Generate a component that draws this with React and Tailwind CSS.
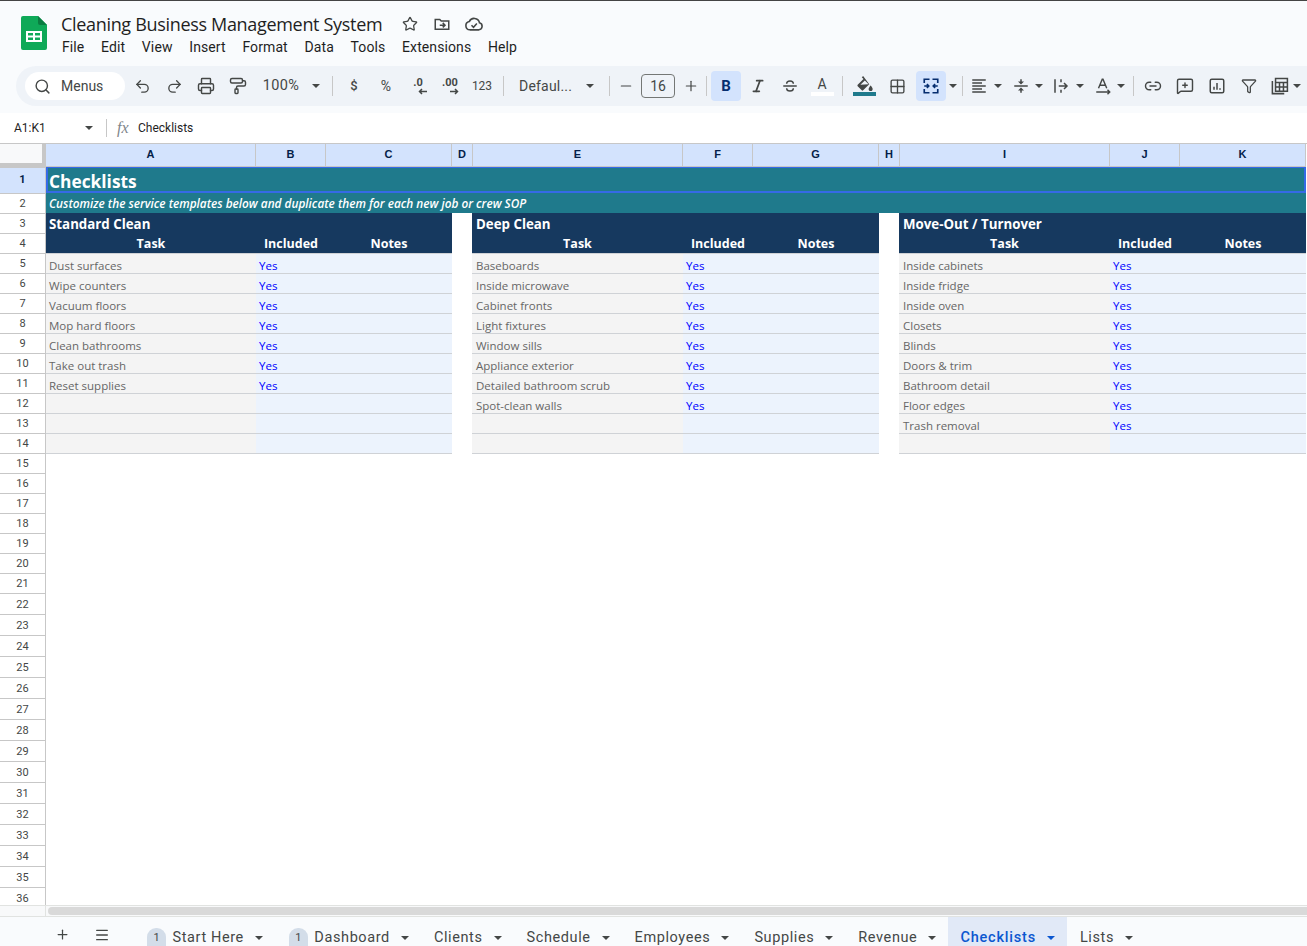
import { Fragment } from 'react';
import {
  Star, Undo2, Redo2, Printer, PaintRoller, Search, Minus, Plus, Italic, Grid2x2, Link2, MessageSquarePlus,
  Filter, Menu,
} from 'lucide-react';

const FONT_UI = "font-['Roboto','Liberation_Sans',sans-serif]";
const FONT_CELL = "font-['Open_Sans','Noto_Sans',sans-serif]";
const HEAD_COLS = 'grid grid-cols-[46px_210px_70px_126px_21px_210px_70px_126px_21px_210px_70px_126px]';
// cell fills start one pixel left of the column edge, over the neighbour's gridline
const COLS = 'grid grid-cols-[46px_210px_70px_126px_20px_211px_70px_126px_20px_211px_70px_126px] grid-rows-1';

const columns = ['A', 'B', 'C', 'D', 'E', 'F', 'G', 'H', 'I', 'J', 'K'];

const standard = ['Dust surfaces', 'Wipe counters', 'Vacuum floors', 'Mop hard floors', 'Clean bathrooms', 'Take out trash', 'Reset supplies'];
const deep = ['Baseboards', 'Inside microwave', 'Cabinet fronts', 'Light fixtures', 'Window sills', 'Appliance exterior', 'Detailed bathroom scrub', 'Spot-clean walls'];
const moveOut = ['Inside cabinets', 'Inside fridge', 'Inside oven', 'Closets', 'Blinds', 'Doors & trim', 'Bathroom detail', 'Floor edges', 'Trash removal'];

const sections = [
  { title: 'Standard Clean', items: standard },
  { title: 'Deep Clean', items: deep },
  { title: 'Move-Out / Turnover', items: moveOut },
];

const menus = ['File', 'Edit', 'View', 'Insert', 'Format', 'Data', 'Tools', 'Extensions', 'Help'];

const tabs = [
  { name: 'Start Here', badge: true },
  { name: 'Dashboard', badge: true },
  { name: 'Clients' },
  { name: 'Schedule' },
  { name: 'Employees' },
  { name: 'Supplies' },
  { name: 'Revenue' },
  { name: 'Checklists', active: true },
  { name: 'Lists' },
];

const SheetsLogo = () => (
  <svg width="26" height="34" viewBox="0 0 26 34">
    <path d="M2 0h15l9 9v23a2 2 0 0 1-2 2H2a2 2 0 0 1-2-2V2a2 2 0 0 1 2-2z" fill="#0fa958" />
    <path d="M17 0l9 9h-7a2 2 0 0 1-2-2z" fill="#0a7d41" />
    <path d="M5 15h16v11H5z M7 17v2.5h5V17z M14 17v2.5h5V17z M7 21.5V24h5v-2.5z M14 21.5V24h5v-2.5z" fill="#fff" fillRule="evenodd" />
  </svg>
);

const MoveIcon = () => (
  <svg width="18" height="18" viewBox="0 0 24 24" fill="none" stroke="#444746" strokeWidth="2">
    <path d="M3 6h6l2 2h10v11H3z" />
    <path d="M9 13.5h7M13 10.5l3 3-3 3" />
  </svg>
);

const CloudIcon = () => (
  <svg width="20" height="20" viewBox="0 0 24 24" fill="none" stroke="#444746" strokeWidth="1.9">
    <path d="M7 19a5 5 0 0 1-.7-9.9A6.5 6.5 0 0 1 18.6 10.6 4.3 4.3 0 0 1 18 19z" />
    <path d="M9 13.5l2.4 2.4 4-4.4" />
  </svg>
);

const Caret = ({ className = 'border-t-[#444746]' }) => (
  <span className={`inline-block w-0 h-0 shrink-0 border-x-[4px] border-x-transparent border-t-[4px] ${className}`} />
);

const Btn = ({ w = 'w-[32px]', active, children }) => (
  <div className={`${w} h-[30px] shrink-0 flex items-center justify-center text-[#444746] rounded-[4px] ${active ? 'bg-[#d3e3fd]' : ''}`}>
    {children}
  </div>
);

const Sep = () => <div className="w-px h-5 bg-[#c7c7c7] shrink-0" />;

const Space = ({ w }) => <div className={`${w} shrink-0`} />;

const Strike = () => (
  <svg width="18" height="18" viewBox="0 0 24 24" fill="none" stroke="#444746" strokeWidth="1.9">
    <path d="M3 12h18M7.5 9c0-5 9-5 9 0M16.5 15c0 5-9 5-9 0" />
  </svg>
);

const FillIcon = () => (
  <div className="flex flex-col items-center">
    <svg width="17" height="15" viewBox="0 0 24 22" fill="#444746">
      <path d="M10 0L8 2l2.5 2.5L2 13c-.6.6-.6 1.5 0 2l6 6c.6.6 1.5.6 2 0l9-9zM6 13l6.500-6.500L18 12z" fillRule="evenodd" />
      <path d="M21 14s-3 3.300-3 5.200a3 3 0 0 0 6 0C24 17.300 21 14 21 14z" />
    </svg>
    <div className="w-[23px] h-[4px] bg-[#1f7a8c] mt-[1px]" />
  </div>
);

const MergeIcon = () => (
  <svg width="18" height="18" viewBox="0 0 24 24" fill="none" stroke="#062e6f" strokeWidth="2.200">
    <path d="M10 3H3v5M14 3h7v5M10 21H3v-5M14 21h7v-5" />
    <path d="M3 12h6M6.500 9.500L9 12l-2.500 2.500M21 12h-6M17.500 9.500L15 12l2.500 2.500" />
  </svg>
);

const AlignIcon = () => (
  <svg width="18" height="18" viewBox="0 0 24 24" fill="none" stroke="#444746" strokeWidth="1.700">
    <path d="M3 4h18M3 8h13M3 12h18M3 16h13M3 20h18" />
  </svg>
);

const VAlignIcon = () => (
  <svg width="18" height="18" viewBox="0 0 24 24" fill="#444746">
    <path d="M3 11h18v2H3z" />
    <path d="M11 3h2v3h3l-4 4-4-4h3zM11 21h2v-3h3l-4-4-4 4h3z" />
  </svg>
);

const WrapIcon = () => (
  <svg width="18" height="18" viewBox="0 0 24 24" fill="none" stroke="#444746" strokeWidth="2">
    <path d="M4 3v18M12 3v4M12 17v4M9 12h11M16 8l4 4-4 4" />
  </svg>
);

const RotateIcon = () => (
  <svg width="18" height="18" viewBox="0 0 24 24" fill="none" stroke="#444746" strokeWidth="1.900">
    <path d="M6 15l5-12h1l5 12M8 11h8M3 20h17M18 17l3 3-3 3" />
  </svg>
);

const ChartIcon = () => (
  <svg width="18" height="18" viewBox="0 0 24 24" fill="none" stroke="#444746" strokeWidth="2">
    <rect x="3" y="3" width="18" height="18" rx="2" />
    <path d="M8 17v-4M12 17V8M16 17v-2" />
  </svg>
);

const TableIcon = () => (
  <svg width="19" height="19" viewBox="0 0 24 24" fill="none" stroke="#444746" strokeWidth="1.900">
    <path d="M3 5v16h15" />
    <path d="M7 2h15v16H7zM7 7h15M7 12.500h15M12 7v11M17 7v11" />
  </svg>
);

const ArrowSmall = ({ dir }) => (
  <svg width="9" height="7" viewBox="0 0 9 7" fill="none" stroke="#444746" strokeWidth="1.500" className="ml-2">
    {dir === 'left' ? <path d="M9 3.500H1.500M4 1L1.500 3.500 4 6" /> : <path d="M0 3.500h7.500M5 1l2.500 2.500L5 6" />}
  </svg>
);

const icon = { size: 18, strokeWidth: 1.9 };

const Toolbar = () => (
  <div className={`ml-4 h-[40px] bg-[#eff3f8] rounded-l-[20px] flex items-center ${FONT_UI}`}>
    <div className="ml-[9px] w-[100px] h-[28px] bg-white rounded-full flex items-center text-[#444746] shrink-0">
      <Search size={17} strokeWidth={2} className="ml-[9px]" />
      <span className="ml-[10px] text-[14px]">Menus</span>
    </div>
    <Space w="w-[1px]" />
    <Btn><Undo2 {...icon} size={17} /></Btn>
    <Btn><Redo2 {...icon} size={17} /></Btn>
    <Btn><Printer {...icon} /></Btn>
    <Btn><PaintRoller {...icon} /></Btn>
    <Btn w="w-[73px]">
      <span className="text-[14.500px] tracking-[0.3px] ml-[2px]">100%</span>
      <span className="ml-[13px] flex"><Caret /></span>
    </Btn>
    <Space w="w-[5px]" />
    <Sep />
    <Space w="w-[5px]" />
    <Btn><span className="text-[13px] font-medium">$</span></Btn>
    <Btn><span className="text-[14px]">%</span></Btn>
    <Btn>
      <div className="flex flex-col items-center">
        <span className="text-[11px] font-bold leading-[10px]">.0</span>
        <ArrowSmall dir="left" />
      </div>
    </Btn>
    <Btn>
      <div className="flex flex-col items-center">
        <span className="text-[11px] font-bold leading-[10px]">.00</span>
        <ArrowSmall dir="right" />
      </div>
    </Btn>
    <Btn><span className="text-[12px]">123</span></Btn>
    <Space w="w-[5px]" />
    <Sep />
    <Space w="w-[15px]" />
    <span className="text-[14px] text-[#444746] w-[67px] shrink-0 tracking-[0.2px]">Defaul...</span>
    <Caret />
    <Space w="w-[15px]" />
    <Sep />
    <Btn><Minus size={16} strokeWidth={1.800} /></Btn>
    <div className="w-[34px] h-[24px] shrink-0 border border-[#747775] rounded-[4px] flex items-center justify-center text-[14px] text-[#444746] -ml-[1px]">16</div>
    <Btn w="w-[31px]"><Plus size={16} strokeWidth={1.800} /></Btn>
    <Sep />
    <Space w="w-[4px]" />
    <Btn w="w-[30px]" active><span className="text-[15px] font-bold text-[#062e6f]">B</span></Btn>
    <Space w="w-[1px]" />
    <Btn><Italic size={16} strokeWidth={2.500} /></Btn>
    <Btn><Strike /></Btn>
    <Btn>
      <div className="flex flex-col items-center">
        <span className="text-[14px] leading-[14px]">A</span>
        <div className="w-[23px] h-[4px] bg-white mt-[1px]" />
      </div>
    </Btn>
    <Space w="w-[4px]" />
    <Sep />
    <Space w="w-[5px]" />
    <Btn><FillIcon /></Btn>
    <Space w="w-[1px]" />
    <Btn><Grid2x2 {...icon} size={17} /></Btn>
    <Space w="w-[3px]" />
    <Btn w="w-[30px]" active><MergeIcon /></Btn>
    <Space w="w-[1px]" />
    <Btn w="w-[12px]"><Caret /></Btn>
    <Space w="w-[3px]" />
    <Sep />
    <Btn w="w-[31px]"><AlignIcon /></Btn>
    <Caret />
    <Space w="w-[5px]" />
    <Btn w="w-[28px]"><VAlignIcon /></Btn>
    <Caret />
    <Space w="w-[4px]" />
    <Btn w="w-[28px]"><WrapIcon /></Btn>
    <Space w="w-[1px]" />
    <Caret />
    <Space w="w-[5px]" />
    <Btn w="w-[28px]"><RotateIcon /></Btn>
    <Caret />
    <Space w="w-[8px]" />
    <Sep />
    <Space w="w-[3px]" />
    <Btn><Link2 size={18} strokeWidth={1.900} /></Btn>
    <Btn><MessageSquarePlus {...icon} /></Btn>
    <Btn><ChartIcon /></Btn>
    <Btn><Filter {...icon} size={16} /></Btn>
    <Btn w="w-[28px]"><TableIcon /></Btn>
    <Btn w="w-[8px]"><Caret /></Btn>
  </div>
);

const Header = () => (
  <div className={`bg-[#f9fbfd] border-t-[1px] border-[#444] h-[113px] shrink-0 ${FONT_UI}`}>
    <div className="flex h-[65px]">
      <div className="w-[61px] pl-[21px] pt-[15px] shrink-0"><SheetsLogo /></div>
      <div className="pt-[10px]">
        <div className="flex items-center h-[26px]">
          <span className="text-[18px] leading-[26px] text-[#1f1f1f] w-[341px] font-['Open_Sans','Noto_Sans',sans-serif] tracking-[-0.320px]">Cleaning Business Management System</span>
          <Star size={16} strokeWidth={1.900} className="text-[#444746]" />
          <Space w="w-[15px]" />
          <MoveIcon />
          <Space w="w-[13px]" />
          <CloudIcon />
        </div>
        <div className="flex gap-[16.700px] text-[14px] leading-[20px] text-[#1f1f1f] ml-[1px] tracking-[0.100px]">
          {menus.map((m) => <span key={m}>{m}</span>)}
        </div>
      </div>
    </div>
    <Toolbar />
  </div>
);

const FormulaBar = () => (
  <div className={`h-[30px] shrink-0 bg-white flex items-center ${FONT_UI}`}>
    <span className="ml-[14px] w-[71px] text-[12px] text-[#1f1f1f]">A1:K1</span>
    <Caret />
    <Space w="w-[13px]" />
    <div className="w-px h-[18px] bg-[#c7c7c7]" />
    <span className="ml-[10px] w-[21px] text-[16px] italic text-[#80868b] font-['Liberation_Serif',serif]">fx</span>
    <span className="text-[12px] text-[#1f1f1f]">Checklists</span>
  </div>
);

const RowHead = ({ n, selected }) => (
  <div className={`flex items-center justify-center border-r border-t border-[#c7c7c7] text-[11px] leading-[14px] ${FONT_UI} ${selected ? 'bg-[#d3e3fd] font-bold text-[#041e49] pb-[1px]' : 'bg-white text-[#444746] pt-[1px]'}`}>
    {n}
  </div>
);

const ColumnHead = () => (
  <div className={`${HEAD_COLS} h-[24px] border-t border-[#c7c7c7]`}>
    <div className="bg-[#f8f9fa] border-r-[4px] border-b-[4px] border-[#c7c7c7]" />
    {columns.map((c) => (
      <div key={c} className="bg-[#d3e3fd] border-r border-b border-[#c7c7c7] flex items-center justify-center pb-[2px] text-[11px] font-bold text-[#041e49] font-['Liberation_Sans',sans-serif]">
        {c}
      </div>
    ))}
  </div>
);

const Gap = () => <div className="bg-white" />;

const TitleRows = () => (
  <>
    <div className={`${COLS} h-[26px]`}>
      <RowHead n={1} selected />
      <div className={`col-span-11 bg-[#1f7a8c] border-2 border-t-[1px] border-[#356ae6] flex items-center pl-[1px] pt-[3px] text-[17.330px] leading-[20px] font-bold text-white ${FONT_CELL}`}>Checklists</div>
    </div>
    <div className={`${COLS} h-[20px]`}>
      <RowHead n={2} />
      <div className={`col-span-11 bg-[#1f7a8c] flex items-center pl-[3px] text-[11.800px] leading-[16px] font-semibold italic text-white ${FONT_CELL}`}>
        Customize the service templates below and duplicate them for each new job or crew SOP
      </div>
    </div>
  </>
);

const SectionRows = () => (
  <>
    <div className={`${COLS} h-[20px]`}>
      <RowHead n={3} />
      {sections.map((s, i) => (
        <Fragment key={s.title}>
          <div className={`col-span-3 bg-[#16395f] flex items-end text-[13.300px] leading-[18px] font-bold text-white ${FONT_CELL} ${i === 0 ? 'pl-[3px]' : 'pl-[4px]'}`}>{s.title}</div>
          {i < 2 && <Gap />}
        </Fragment>
      ))}
    </div>
    <div className={`${COLS} h-[20px]`}>
      <RowHead n={4} />
      {sections.map((s, i) => (
        <Fragment key={s.title}>
          {['Task', 'Included', 'Notes'].map((h) => (
            <div key={h} className={`bg-[#16395f] flex items-end justify-center pb-[1px] text-[12.500px] leading-[17px] font-bold text-white ${FONT_CELL}`}>{h}</div>
          ))}
          {i < 2 && <Gap />}
        </Fragment>
      ))}
    </div>
  </>
);

const DataRows = () => (
  <>
    {Array.from({ length: 10 }, (_, r) => (
      <div key={r} className={`${COLS} h-[20px]`}>
        <RowHead n={r + 5} />
        {sections.map((s, i) => (
          <Fragment key={s.title}>
            <div className={`bg-[#f4f4f4] border-t border-[#cfd2d6] flex items-end text-[11.500px] leading-[15px] text-[#666] ${FONT_CELL} ${i === 0 ? 'pl-[3px]' : 'pl-[4px]'}`}>{s.items[r] || ''}</div>
            <div className={`bg-[#ecf3fd] border-t border-[#cfd2d6] flex items-end pl-[3px] text-[11.500px] leading-[15px] text-[#0000ff] ${FONT_CELL}`}>{s.items[r] ? 'Yes' : ''}</div>
            <div className="bg-[#ecf3fd] border-t border-[#cfd2d6]" />
            {i < 2 && <Gap />}
          </Fragment>
        ))}
      </div>
    ))}
  </>
);

const LastRowEdge = () => (
  <div className={`${COLS} h-[20px]`}>
    <RowHead n={15} />
    {sections.map((s, i) => (
      <Fragment key={s.title}>
        <div className="col-span-3 border-t border-[#cfd2d6]" />
        {i < 2 && <Gap />}
      </Fragment>
    ))}
  </div>
);

const EmptyRows = () => (
  <div className="w-[46px]">
    {Array.from({ length: 6 }, (_, i) => (
      <div key={i} className="h-[20px] grid"><RowHead n={i + 16} /></div>
    ))}
    {Array.from({ length: 15 }, (_, i) => (
      <div key={i} className="h-[21px] grid"><RowHead n={i + 22} /></div>
    ))}
  </div>
);

const Sheet = () => (
  <div className="h-[762px] shrink-0 overflow-hidden bg-white">
    <ColumnHead />
    <TitleRows />
    <SectionRows />
    <DataRows />
    <LastRowEdge />
    <EmptyRows />
  </div>
);

const ScrollBar = () => (
  <div className="h-[12px] shrink-0 flex border-y border-[#e1e3e1] bg-[#f8f9fa]">
    <div className="w-[46px] border-r border-[#e1e3e1]" />
    <div className="flex-1 my-[1px] ml-[2px] bg-[#d9d9d9] rounded-l-full" />
  </div>
);

const TabBar = () => (
  <div className={`flex-1 bg-[#f9fbfd] flex items-stretch text-[14.500px] tracking-[0.600px] text-[#444746] ${FONT_UI}`}>
    <div className="w-[133px] flex items-center pt-[4px] shrink-0">
      <Plus size={15} strokeWidth={2} className="ml-[55px]" />
      <Menu size={16} strokeWidth={2} className="ml-[24px]" />
    </div>
    {tabs.map((t) => (
      <div key={t.name} className={`flex items-center pt-[8px] pr-[12px] ${t.active ? 'bg-[#e1e9f7] pl-[12px] text-[#0b57d0] font-medium tracking-[0.800px]' : t.badge ? 'pl-[14px]' : 'pl-[13px]'}`}>
        {t.badge && (
          <span className="w-[19px] h-[21px] mr-[6.500px] self-end bg-[#d3dde9] rounded-t-[9px] text-[11px] leading-[14px] tracking-normal flex items-start justify-center pt-[3px]">1</span>
        )}
        <span className="mt-[2px]">{t.name}</span>
        <span className="ml-[11px] mt-[2px] flex">
          <Caret className={t.active ? 'border-t-[#0b57d0]' : 'border-t-[#444746]'} />
        </span>
      </div>
    ))}
  </div>
);

export default function App() {
  return (
    <div className="w-[1307px] h-[946px] overflow-hidden flex flex-col bg-white">
      <Header />
      <FormulaBar />
      <Sheet />
      <ScrollBar />
      <TabBar />
    </div>
  );
}
